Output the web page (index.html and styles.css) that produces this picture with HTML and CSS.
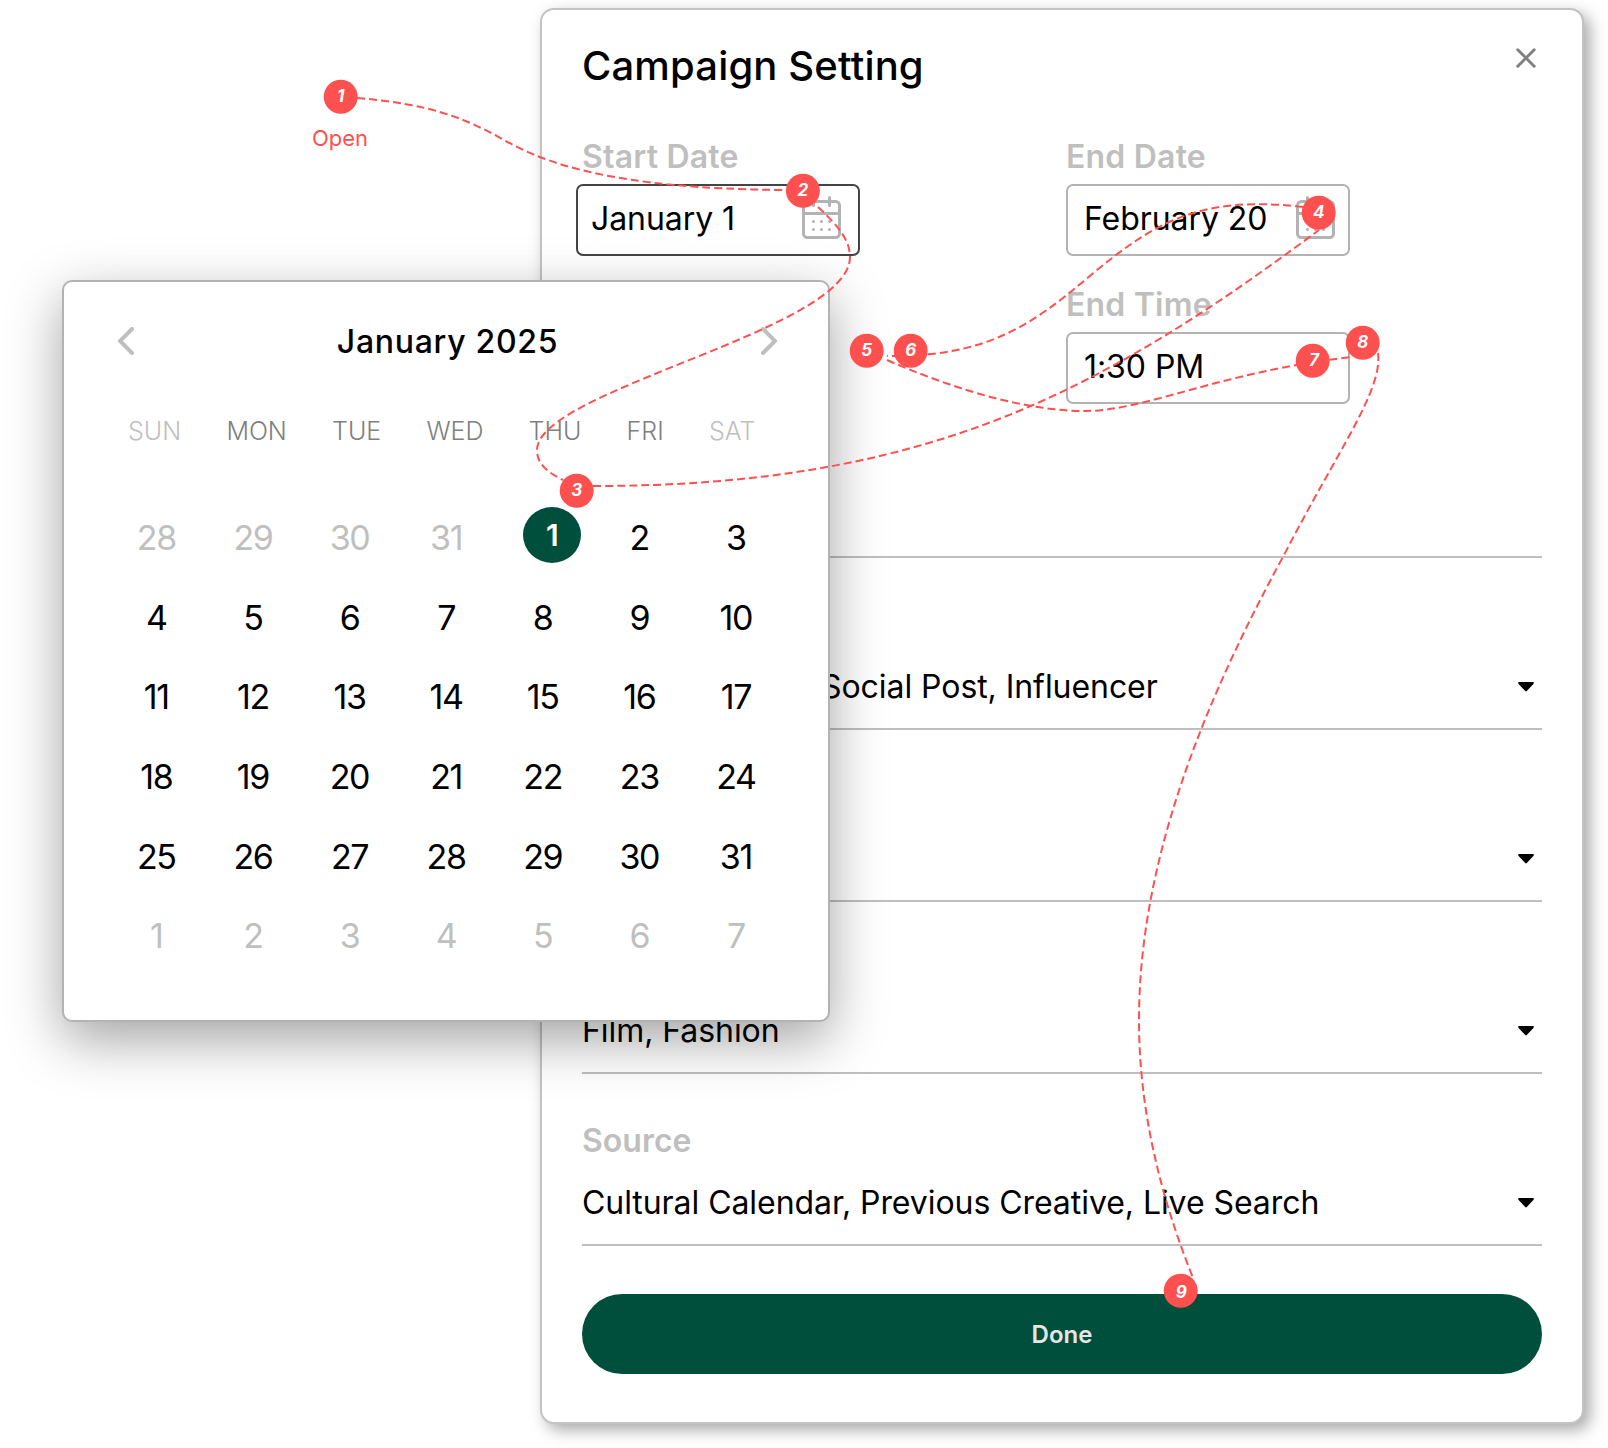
FILE: index.html
```
<!DOCTYPE html>
<html lang="en">
<head>
    <meta charset="UTF-8"/>
    <title>Campaign Setting</title>
    <link rel="stylesheet" href="styles.css">
</head>
<body>
<main class="stage">
    <section class="panel">
        <header class="panel-header">
            <h1>Campaign Setting</h1>
            <svg class="close" viewBox="0 0 20 20"><path d="M1.8 1.8 18.2 18.2M18.2 1.8 1.8 18.2"/></svg>
        </header>

        <div class="dates">
            <div class="field field-start">
                <label>Start Date</label>
                <div class="input input-active">
                    <span>January 1</span>
                    <svg class="cal-icon" viewBox="0 0 40 44">
                        <rect x="1.5" y="5.5" width="36" height="36" rx="4"/>
                        <path d="M1.5 17.5h36M11.5 1.5v8M27.5 1.5v8"/>
                        <path class="dots" d="M11.5 25.5h0M19.5 25.5h0M27.5 25.5h0M11.5 33.5h0M19.5 33.5h0M27.5 33.5h0"/>
                    </svg>
                </div>
            </div>
            <div class="field">
                <label>End Date</label>
                <div class="input">
                    <span>February 20</span>
                    <svg class="cal-icon" viewBox="0 0 40 44">
                        <rect x="1.5" y="5.5" width="36" height="36" rx="4"/>
                        <path d="M1.5 17.5h36M11.5 1.5v8M27.5 1.5v8"/>
                        <path class="dots" d="M11.5 25.5h0M19.5 25.5h0M27.5 25.5h0M11.5 33.5h0M19.5 33.5h0M27.5 33.5h0"/>
                    </svg>
                </div>
                <label>End Time</label>
                <div class="input"><span>1:30 PM</span></div>
            </div>
        </div>

        <div class="row row-first"></div>
        <div class="row">
            <div class="value value-channels">Social Post, Influencer</div>
            <svg class="caret" viewBox="0 0 16 10"><path d="M.6 0h14.8q1 .7 0 1.9L8.8 9q-.8.8-1.6 0L.6 1.9Q-.4.7.6 0z"/></svg>
        </div>
        <div class="row">
            <div class="value"></div>
            <svg class="caret" viewBox="0 0 16 10"><path d="M.6 0h14.8q1 .7 0 1.9L8.8 9q-.8.8-1.6 0L.6 1.9Q-.4.7.6 0z"/></svg>
        </div>
        <div class="row">
            <div class="value">Film, Fashion</div>
            <svg class="caret" viewBox="0 0 16 10"><path d="M.6 0h14.8q1 .7 0 1.9L8.8 9q-.8.8-1.6 0L.6 1.9Q-.4.7.6 0z"/></svg>
        </div>
        <div class="row">
            <label>Source</label>
            <div class="value">Cultural Calendar, Previous Creative, Live Search</div>
            <svg class="caret" viewBox="0 0 16 10"><path d="M.6 0h14.8q1 .7 0 1.9L8.8 9q-.8.8-1.6 0L.6 1.9Q-.4.7.6 0z"/></svg>
        </div>

        <button class="done">Done</button>
    </section>

    <!-- date picker popup -->
    <section class="calendar">
        <header class="calendar-header">
            <svg class="chevron" viewBox="0 0 16 28"><path d="M14 2 2 14l12 12"/></svg>
            <h2>January 2025</h2>
            <svg class="chevron" viewBox="0 0 16 28"><path d="m2 2 12 12L2 26"/></svg>
        </header>
        <div class="weekdays">
            <span class="muted">SUN</span><span>MON</span><span>TUE</span><span>WED</span><span>THU</span><span>FRI</span><span class="muted">SAT</span>
        </div>
        <div class="days">
            <span class="muted">28</span><span class="muted">29</span><span class="muted">30</span><span class="muted">31</span><span><b class="selected">1</b></span><span>2</span><span>3</span>
            <span>4</span><span>5</span><span>6</span><span>7</span><span>8</span><span>9</span><span>10</span>
            <span>11</span><span>12</span><span>13</span><span>14</span><span>15</span><span>16</span><span>17</span>
            <span>18</span><span>19</span><span>20</span><span>21</span><span>22</span><span>23</span><span>24</span>
            <span>25</span><span>26</span><span>27</span><span>28</span><span>29</span><span>30</span><span>31</span>
            <span class="muted">1</span><span class="muted">2</span><span class="muted">3</span><span class="muted">4</span><span class="muted">5</span><span class="muted">6</span><span class="muted">7</span>
        </div>
    </section>

    <!-- user flow: dashed path with numbered steps -->
    <svg class="flow" viewBox="0 0 1608 1448">
        <g class="flow-lines">
            <path d="M357 98C430 104 465 118 504 140C543 162 610 189 786 190"/>
            <path d="M818 207C834 222 850 238 850 257C850 330 537 390 537 450C537 464 547 472 563 480"/>
            <path d="M593 486C760 486 900 463 1033 405C1140 358 1230 296 1319 230"/>
            <path d="M1303 207C1200 195 1155 222 1091 275C1030 327 985 357 887 356"/>
            <path d="M887 360C960 392 1030 411 1085 411C1145 411 1220 372 1351 357"/>
            <path d="M1378 353C1383 390 1338 450 1284 555C1205 700 1139 860 1139 1020C1139 1110 1160 1195 1193 1278"/>
        </g>
        <g class="flow-steps">
            <circle cx="340.7" cy="96.7" r="17"/><text x="340.7" y="102.2">1</text>
            <circle cx="802.9" cy="190.7" r="17"/><text x="802.9" y="195.7">2</text>
            <circle cx="576.7" cy="490.7" r="17"/><text x="576.7" y="495.7">3</text>
            <circle cx="1318.7" cy="212.7" r="17"/><text x="1318.7" y="217.7">4</text>
            <circle cx="866.7" cy="350.7" r="17"/><text x="866.7" y="355.7">5</text>
            <circle cx="910.7" cy="350.7" r="17"/><text x="910.7" y="355.7">6</text>
            <circle cx="1312.7" cy="360.7" r="17"/><text x="1314" y="365.7">7</text>
            <circle cx="1362.7" cy="342.7" r="17"/><text x="1362.7" y="347.7">8</text>
            <circle cx="1180.7" cy="1290.7" r="17"/><text x="1181.2" y="1297.7">9</text>
        </g>
        <text class="flow-label" x="340" y="146">Open</text>
    </svg>
</main>
</body>
</html>
```
FILE: styles.css
```
* {
    box-sizing: border-box;
}

body {
    margin: 0;
    background: #fff;
    color: #000;
    font-family: Inter, "Liberation Sans", sans-serif;
    font-size: 32px;
    overflow: hidden;
}

h1, h2 {
    margin: 0;
    font-weight: 500;
}

.stage {
    position: relative;
    width: 1608px;
    height: 1448px;
    padding: 8px 0 0 540px;
}

.panel {
    display: flex;
    flex-direction: column;
    width: 1044px;
    height: 1416px;
    padding: 32px 40px 48px;
    border: 2px solid #c3c3c3;
    border-radius: 14px;
    background: #fff;
    box-shadow: 6px 6px 16px rgba(0, 0, 0, 0.34);
}

.panel-header {
    display: flex;
    justify-content: space-between;
    height: 95px;
    padding-right: 6px;
}

.panel-header h1 {
    font-size: 40px;
    line-height: 48px;
    letter-spacing: 0.15px;
}

.close {
    width: 20px;
    height: 20px;
    margin-top: 6px;
    fill: none;
    stroke: #808080;
    stroke-width: 3;
    stroke-linecap: round;
}

label {
    display: block;
    color: #bfbfbf;
    font-weight: 600;
    line-height: 40px;
}

.dates {
    display: flex;
    gap: 200px;
    height: 269px;
}

.dates label {
    letter-spacing: 0.2px;
}

.field {
    width: 284px;
}

.input {
    display: flex;
    justify-content: space-between;
    align-items: center;
    width: 284px;
    height: 72px;
    margin: 7px 0 29px;
    padding: 0 12px 4px 16px;
    border: 2px solid #b3b3b3;
    border-radius: 7px;
    letter-spacing: -0.06px;
}

.input-active {
    margin-left: -6px;
    padding-left: 13px;
    padding-right: 16px;
    border-color: #444;
}

.cal-icon {
    width: 40px;
    height: 44px;
    fill: none;
    stroke: #b3b3b3;
    stroke-width: 3;
    stroke-linecap: round;
}

.row {
    position: relative;
    height: 172px;
    padding-top: 47px;
    border-bottom: 2px solid #bfbfbf;
}

.row-first {
    height: 152px;
}

.value {
    height: 40px;
    line-height: 40px;
    margin-top: 62px;
    letter-spacing: -0.06px;
}

.row label + .value {
    margin-top: 22px;
}

.value-channels {
    padding-left: 239px;
}

.caret {
    position: absolute;
    right: 8px;
    bottom: 36px;
    width: 16px;
    height: 10px;
}

.done {
    height: 80px;
    margin-top: auto;
    border: 0;
    border-radius: 40px;
    background: #004f3c;
    color: #e6e6e6;
    font: 600 24px Inter, "Liberation Sans", sans-serif;
}

.calendar {
    position: absolute;
    left: 62px;
    top: 280px;
    width: 768px;
    height: 742px;
    padding: 39px 51px 0 52px;
    border: 2px solid #b3b3b3;
    border-radius: 10px;
    background: #fff;
    box-shadow: 0 18px 54px rgba(0, 0, 0, 0.36);
}

.calendar-header {
    display: flex;
    justify-content: space-between;
    align-items: center;
    height: 40px;
    padding: 0 0 0 2px;
}

.calendar-header h2 {
    font-size: 32px;
    letter-spacing: 0.7px;
}

.chevron {
    width: 16px;
    height: 28px;
    fill: none;
    stroke: #bfbfbf;
    stroke-width: 4;
    stroke-linecap: round;
}

.weekdays {
    display: flex;
    gap: 45.2px;
    padding-left: 12px;
    margin-top: 54px;
    color: #808080;
    font-size: 25px;
    font-weight: 300;
    line-height: 32px;
}

.days {
    display: grid;
    grid-template-columns: repeat(7, 96.6px);
    grid-auto-rows: 79.7px;
    margin: 51px 0 0 -8px;
    font-size: 34px;
    line-height: 79.7px;
    letter-spacing: -1.4px;
    text-align: center;
}

.muted {
    color: #bfbfbf;
}

.selected {
    display: block;
    width: 58px;
    height: 56px;
    margin: 9px 0 0 29px;
    border-radius: 50%;
    background: #004f3c;
    color: #fff;
    font-size: 30px;
    font-weight: 600;
    line-height: 56px;
    letter-spacing: 0;
}

.flow {
    position: absolute;
    left: 0;
    top: 0;
    width: 1608px;
    height: 1448px;
}

.flow-lines {
    fill: none;
    stroke: #ff5050;
    stroke-width: 2;
    stroke-dasharray: 8 4;
}

.flow-steps circle {
    fill: #ff5050;
}

.flow-steps text {
    fill: #fff;
    font-size: 17px;
    font-style: italic;
    font-weight: 700;
    text-anchor: middle;
}

.flow-label {
    fill: #ff5050;
    font-size: 22px;
    text-anchor: middle;
}
```
